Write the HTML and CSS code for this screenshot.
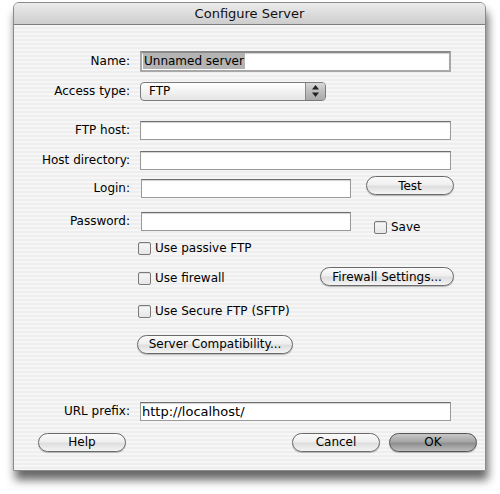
FILE: index.html
```html
<!DOCTYPE html>
<html>
<head>
<meta charset="utf-8">
<link rel="stylesheet" href="styles.css">
</head>
<body>
<div class="window">
  <div class="titlebar">Configure Server</div>
  <div class="content">
    <div class="row r-name">
      <div class="label">Name:</div>
      <div class="field wide"><span class="sel">Unnamed server</span></div>
    </div>
    <div class="row r-access">
      <div class="label">Access type:</div>
      <div class="popup"><span class="popup-text">FTP</span><span class="stepper"><svg width="9" height="14" viewBox="0 0 9 14"><path d="M4.5 1 L8 5.5 L1 5.5 Z" fill="#222"/><path d="M4.5 13 L8 8.5 L1 8.5 Z" fill="#222"/></svg></span></div>
    </div>
    <div class="row r-host">
      <div class="label">FTP host:</div>
      <div class="field wide"></div>
    </div>
    <div class="row r-dir">
      <div class="label">Host directory:</div>
      <div class="field wide"></div>
    </div>
    <div class="row r-login">
      <div class="label">Login:</div>
      <div class="field short"></div>
      <div class="btn test">Test</div>
    </div>
    <div class="row r-pass">
      <div class="label">Password:</div>
      <div class="field short"></div>
      <div class="check save"><span class="box"></span>Save</div>
    </div>
    <div class="row r-passive">
      <div class="label"></div>
      <div class="check"><span class="box"></span>Use passive FTP</div>
    </div>
    <div class="row r-firewall">
      <div class="label"></div>
      <div class="check grow"><span class="box"></span>Use firewall</div>
      <div class="btn fwset">Firewall Settings...</div>
    </div>
    <div class="row r-secure">
      <div class="label"></div>
      <div class="check"><span class="box"></span>Use Secure FTP (SFTP)</div>
    </div>
    <div class="row r-compat">
      <div class="label"></div>
      <div class="btn compat">Server Compatibility...</div>
    </div>
    <div class="row r-url">
      <div class="label">URL prefix:</div>
      <div class="field wide url">http://localhost/</div>
    </div>
    <div class="row r-buttons">
      <div class="btn help">Help</div>
      <div class="spacer"></div>
      <div class="btn cancel">Cancel</div>
      <div class="btn ok">OK</div>
    </div>
  </div>
</div>
</body>
</html>
```
FILE: styles.css
```css
html, body {
  margin: 0;
  padding: 0;
  background: #ffffff;
}
body {
  width: 500px;
  height: 494px;
  overflow: hidden;
  font-family: "DejaVu Sans", "Liberation Sans", sans-serif;
  font-size: 12px;
  color: #000;
}
.window {
  margin: 2px 0 0 13px;
  width: 471px;
  height: 467px;
  border: 1px solid #8a8a8a;
  border-radius: 6px 6px 0 0;
  box-shadow: 2px 9px 10px rgba(0,0,0,0.6);
  background: repeating-linear-gradient(to bottom, #eeeeee 0px, #eeeeee 2px, #f6f6f6 2px, #f6f6f6 4px);
  overflow: hidden;
}
.titlebar {
  height: 21px;
  line-height: 21px;
  text-align: center;
  font-size: 13px;
  color: #111;
  background: linear-gradient(to bottom, #ececec 0%, #dcdcdc 50%, #cdcdcd 100%);
  border-bottom: 1px solid #7d7d7d;
}
.content {
  display: flex;
  flex-direction: column;
}
.row {
  display: flex;
  align-items: center;
  height: 20px;
}
.label {
  width: 116px;
  text-align: right;
  padding-right: 10px;
  flex: none;
  white-space: nowrap;
}
.r-name { margin-top: 26px; }
.r-access { margin-top: 10px; }
.r-host { margin-top: 19px; }
.r-dir { margin-top: 10px; }
.r-login { margin-top: 8px; }
.r-pass { margin-top: 13px; }
.r-passive { margin-top: 7px; }
.r-firewall { margin-top: 10px; }
.r-secure { margin-top: 13px; }
.r-compat { margin-top: 13px; }
.r-url { margin-top: 47px; }
.r-buttons { margin-top: 11px; padding: 0 8px 0 24px; }

.field {
  box-sizing: border-box;
  height: 19px;
  background: #fff;
  border: 1px solid #9a9a9a;
  border-top-color: #6e6e6e;
  box-shadow: inset 0 1px 1px rgba(0,0,0,0.18);
  display: flex;
  align-items: center;
  padding-left: 1px;
  font-size: 13px;
}
.wide { width: 311px; }
.short { width: 210px; margin-left: 1px; }
.r-name .field { height: 21px; border: 2px solid #a8a8a8; border-top-color: #8a8a8a; font-size: 12px; }
.sel {
  background: #b4b4b4;
  padding: 0 1px;
  line-height: 16px;
}
.url { font-size: 13px; }

.popup {
  width: 186px;
  height: 19px;
  box-sizing: border-box;
  border: 1px solid #7a7a7a;
  border-radius: 4px;
  background: linear-gradient(to bottom, #ffffff 0%, #f2f2f2 50%, #e4e4e4 100%);
  display: flex;
  align-items: center;
  overflow: hidden;
}
.popup-text {
  flex: 1;
  padding-left: 8px;
}
.stepper {
  width: 19px;
  height: 100%;
  border-left: 1px solid #8a8a8a;
  background: linear-gradient(to bottom, #d8d8d8 0%, #bdbdbd 50%, #a9a9a9 100%);
  display: flex;
  align-items: center;
  justify-content: center;
}

.btn {
  height: 19px;
  box-sizing: border-box;
  border: 1px solid #6a6a6a;
  border-radius: 10px;
  background: linear-gradient(to bottom, #fafafa 0%, #efefef 45%, #dedede 55%, #f4f4f4 100%);
  box-shadow: 0 1px 1px rgba(0,0,0,0.25);
  display: flex;
  align-items: center;
  justify-content: center;
  font-size: 12px;
  white-space: nowrap;
}
.test { width: 88px; margin-left: 15px; margin-top: -5px; }
.fwset { width: 134px; margin-right: 31px; margin-top: -3px; }
.compat { width: 156px; margin-left: -3px; }
.help { width: 88px; }
.cancel { width: 88px; }
.ok {
  width: 88px;
  margin-left: 9px;
  border-color: #555;
  background: linear-gradient(to bottom, #c8c8c8 0%, #a6a6a6 45%, #8e8e8e 55%, #bcbcbc 100%);
}
.spacer { flex: 1; }

.check {
  display: flex;
  align-items: center;
  white-space: nowrap;
  margin-left: -2px;
}
.grow { flex: 1; }
.box {
  width: 11px;
  height: 11px;
  border: 1px solid #7a7a7a;
  border-radius: 2px;
  background: linear-gradient(to bottom, #f8f8f8 0%, #e6e6e6 100%);
  margin-right: 4px;
  box-shadow: inset 0 1px 1px rgba(0,0,0,0.1);
}
.save { margin-left: 23px; margin-top: 12px; }
```
